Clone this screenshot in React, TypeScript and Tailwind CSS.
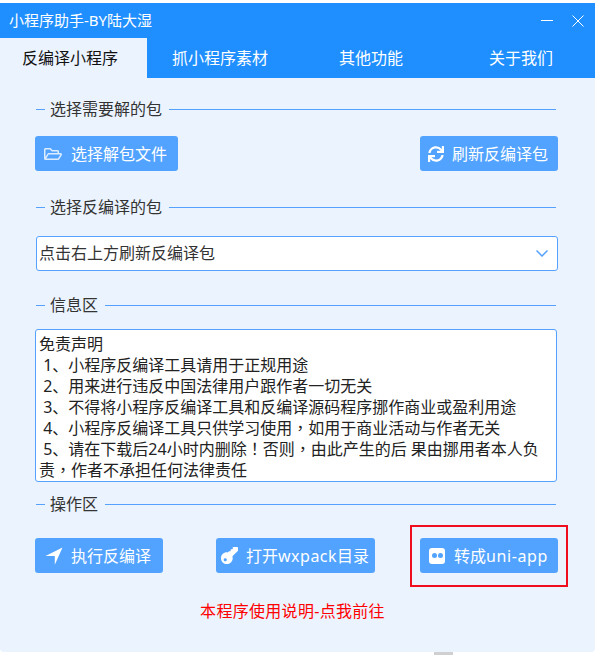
import { FaKey, FaRegFolderOpen, FaSync } from "react-icons/fa";
import type { ReactNode } from "react";

const tabs = ["抓小程序素材", "其他功能", "关于我们"];

const notice = [
  "免责声明",
  " 1、小程序反编译工具请用于正规用途",
  " 2、用来进行违反中国法律用户跟作者一切无关",
  " 3、不得将小程序反编译工具和反编译源码程序挪作商业或盈利用途",
  " 4、小程序反编译工具只供学习使用，如用于商业活动与作者无关",
  " 5、请在下载后24小时内删除！否则，由此产生的后 果由挪用者本人负责，作者不承担任何法律责任",
];

function SectionTitle({ children }: { children: ReactNode }) {
  return (
    <div className="flex h-[24px] items-center pl-px pr-[2px] text-[#333333]">
      <div className="h-px w-[9px] bg-[#55a1ff]" />
      <span className="px-[5px] leading-[24px] whitespace-nowrap">{children}</span>
      <div className="ml-[2px] h-px flex-1 bg-[#55a1ff]" />
    </div>
  );
}

function ActionButton({ icon, label, className }: { icon: ReactNode; label: ReactNode; className: string }) {
  return (
    <button className={`flex h-[35px] items-center rounded-[3px] bg-[#52a3ff] text-white ${className}`}>
      {icon}
      <span className="whitespace-nowrap">{label}</span>
    </button>
  );
}

// comma and exclamation mark sit centred in the cell in the original font
function NoticeLine({ text }: { text: string }) {
  return (
    <div>
      {text.split(/([，！])/).map((part, i) =>
        part === "，" || part === "！" ? (
          <span key={i} className="font-['Noto_Sans','Noto_Sans_CJK_TC',sans-serif]">
            {part}
          </span>
        ) : (
          part
        ),
      )}
    </div>
  );
}

export default function App() {
  return (
    <div
      className="h-[655px] w-[595px] overflow-hidden bg-white pt-[3px] text-[16px]"
      style={{ fontFamily: '"Noto Sans", "Noto Sans CJK SC", sans-serif' }}
    >
      <div className="h-[649px] rounded-b-[4px] bg-[#ebf3fe]">
        {/* Title bar */}
        <div className="flex h-[35px] items-center justify-between bg-[#1f8fff] pl-[9px] pr-[11px] text-white">
          <span className="text-[15px]">小程序助手-BY陆大湿</span>
          <div className="flex items-center gap-[19px]">
            <div className="h-px w-[12px] bg-white" />
            <svg width="12" height="12" viewBox="0 0 12 12" stroke="white" strokeWidth="1">
              <path d="M0.5 0.5 11.5 11.5M11.5 0.5 0.5 11.5" />
            </svg>
          </div>
        </div>

        {/* Tabs */}
        <div className="flex h-[40px] bg-[#1f8fff] text-white">
          <div className="flex w-[147px] items-center justify-center bg-[#ebf3fe] pr-[7px] text-[#111111]">反编译小程序</div>
          <div className="flex w-[121px] items-center justify-end">{tabs[0]}</div>
          <div className="flex w-[135px] items-center justify-end">{tabs[1]}</div>
          <div className="flex w-[150px] items-center justify-end">{tabs[2]}</div>
        </div>

        <div className="pl-[35px] pr-[37px] pt-[19px]">
          <SectionTitle>选择需要解的包</SectionTitle>
          <div className="mt-[15px] flex justify-between">
            <ActionButton
              className="w-[143px] pl-[9px]"
              icon={<FaRegFolderOpen className="mr-[9px] text-[18px] opacity-80" />}
              label="选择解包文件"
            />
            <ActionButton
              className="w-[138px] pl-[8px]"
              icon={<FaSync className="mr-[8px] text-[16px]" />}
              label="刷新反编译包"
            />
          </div>

          <div className="mt-[24px]">
            <SectionTitle>选择反编译的包</SectionTitle>
          </div>
          <div className="mt-[17px] ml-px flex h-[35px] items-center justify-between rounded-[3px] border border-[#55a1ff] bg-white pl-[2px] pr-[9px] text-[#333333]">
            <span className="-mt-[2px]">点击右上方刷新反编译包</span>
            <svg width="12" height="7" viewBox="0 0 12 7" fill="none" stroke="#55a1ff" strokeWidth="1.5">
              <path d="M0.5 0.5 6 6 11.5 0.5" />
            </svg>
          </div>

          <div className="mt-[22px]">
            <SectionTitle>信息区</SectionTitle>
          </div>
          <div className="mt-[12px] h-[153px] w-[522px] overflow-hidden rounded-[3px] border border-[#55a1ff] bg-white pl-[3px] pt-[4px] leading-[21px] whitespace-pre-wrap text-[#222222]">
            {notice.map((line) => (
              <NoticeLine key={line} text={line} />
            ))}
          </div>

          <div className="mt-[10px]">
            <SectionTitle>操作区</SectionTitle>
          </div>
          <div className="mt-[22px] flex">
            <ActionButton
              className="w-[128px] pl-[10px]"
              icon={
                <svg width="18" height="18" viewBox="0 0 18 18" fill="white" className="mr-[8px]">
                  <path d="M17.5 0.5 0.5 9 9.8 9 9.8 17.8Z" />
                </svg>
              }
              label="执行反编译"
            />
            <ActionButton
              className="ml-[53px] w-[159px] pl-[5px]"
              icon={<FaKey className="mr-[8px] rotate-180 text-[17px]" />}
              label={
                <>
                  打开<span className="tracking-[0.5px]">wxpack</span>目录
                </>
              }
            />
            <div className="relative ml-[45px]">
              <ActionButton
                className="w-[138px] pl-[9px]"
                icon={
                  <span className="mr-[9px] flex h-[16px] w-[16px] items-center justify-center gap-[1px] rounded-[3px] bg-white">
                    <span className="h-[5px] w-[5px] rounded-full bg-[#52a3ff]" />
                    <span className="h-[5px] w-[5px] rounded-full bg-[#52a3ff]" />
                  </span>
                }
                label={
                  <>
                    转成<span className="tracking-[0.6px]">uni-app</span>
                  </>
                }
              />
              {/* Red annotation box */}
              <div className="absolute -left-[10px] -top-[13px] h-[62px] w-[158px] border-2 border-[#f00d1e]" />
            </div>
          </div>

          <div className="mt-[28px] pr-[8px] text-center leading-[20px] tracking-[0.3px] text-[#ff0000]">本程序使用说明-点我前往</div>
        </div>
      </div>
      <div className="ml-[434px] h-[3px] w-[19px] bg-[#d0d0d0]" />
    </div>
  );
}
